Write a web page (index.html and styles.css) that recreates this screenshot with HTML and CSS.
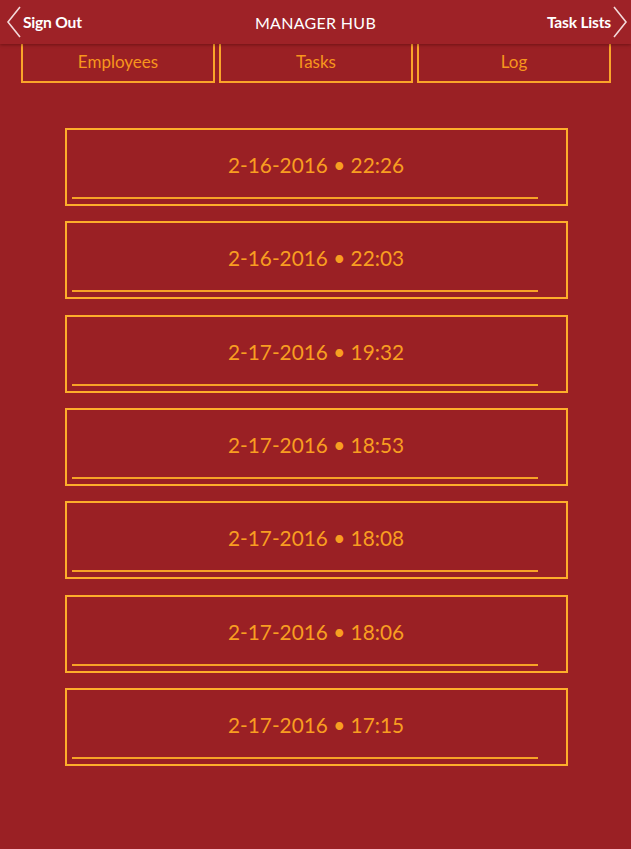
FILE: index.html
```html
<!DOCTYPE html>
<html>
<head>
<meta charset="utf-8">
<link rel="stylesheet" href="styles.css">
</head>
<body>
<header class="topbar">
  <a class="nav-btn nav-left">
    <svg class="chev" width="16" height="32" viewBox="0 0 16 32"><polyline points="14,1 2,16 14,31" fill="none" stroke="#f3d9da" stroke-width="1.6"/></svg>
    <span>Sign Out</span>
  </a>
  <div class="title">MANAGER HUB</div>
  <a class="nav-btn nav-right">
    <span>Task Lists</span>
    <svg class="chev" width="16" height="32" viewBox="0 0 16 32"><polyline points="2,1 14,16 2,31" fill="none" stroke="#f3d9da" stroke-width="1.6"/></svg>
  </a>
</header>
<nav class="tabs">
  <div class="tab">Employees</div>
  <div class="tab">Tasks</div>
  <div class="tab">Log</div>
</nav>
<main class="log-list">
  <div class="entry"><span class="entry-text">2-16-2016 • 22:26</span><span class="entry-line"></span></div>
  <div class="entry"><span class="entry-text">2-16-2016 • 22:03</span><span class="entry-line"></span></div>
  <div class="entry"><span class="entry-text">2-17-2016 • 19:32</span><span class="entry-line"></span></div>
  <div class="entry"><span class="entry-text">2-17-2016 • 18:53</span><span class="entry-line"></span></div>
  <div class="entry"><span class="entry-text">2-17-2016 • 18:08</span><span class="entry-line"></span></div>
  <div class="entry"><span class="entry-text">2-17-2016 • 18:06</span><span class="entry-line"></span></div>
  <div class="entry"><span class="entry-text">2-17-2016 • 17:15</span><span class="entry-line"></span></div>
</main>
</body>
</html>
```
FILE: styles.css
```css
html, body {
  margin: 0;
  padding: 0;
  background: #9a2024;
  height: 100%;
}
body {
  font-family: Lato, "Open Sans", sans-serif;
  overflow: hidden;
}
.topbar {
  position: relative;
  z-index: 2;
  height: 44px;
  background: #9e2227;
  box-shadow: 0 1px 3px rgba(60, 0, 0, 0.45);
  display: flex;
  align-items: center;
  justify-content: space-between;
  color: #fff;
}
.nav-btn {
  display: flex;
  align-items: center;
  font-weight: 700;
  font-size: 15.6px;
  letter-spacing: -0.2px;
  color: #fff;
}
.nav-left {
  padding-left: 6px;
  gap: 1px;
}
.nav-right {
  padding-right: 3px;
  gap: 1px;
}
.chev {
  display: block;
}
.title {
  font-size: 16px;
  letter-spacing: 0.3px;
  color: #fff;
  position: absolute;
  left: 0;
  right: 0;
  text-align: center;
  pointer-events: none;
}
.tabs {
  display: grid;
  grid-template-columns: repeat(3, 194px);
  gap: 4px;
  padding: 0 20px 0 21px;
}
.tab {
  box-sizing: border-box;
  height: 39px;
  border: 2px solid #fba52a;
  border-top: none;
  display: flex;
  align-items: center;
  justify-content: center;
  color: #f7961d;
  font-size: 17px;
  padding-bottom: 2px;
}
.log-list {
  display: flex;
  flex-direction: column;
  align-items: center;
  gap: 15.33px;
  padding-top: 45px;
  padding-left: 1px;
}
.entry {
  box-sizing: border-box;
  width: 503px;
  height: 78px;
  border: 2px solid #fdae2b;
  display: flex;
  flex-direction: column;
  align-items: stretch;
}
.entry-text {
  flex: 1;
  display: flex;
  align-items: center;
  justify-content: center;
  padding-top: 2px;
  color: #f89e21;
  font-size: 20.8px;
  font-weight: 400;
}
.entry-line {
  display: block;
  height: 2px;
  background: #f7a227;
  margin: 0 28px 5px 5px;
}
```
